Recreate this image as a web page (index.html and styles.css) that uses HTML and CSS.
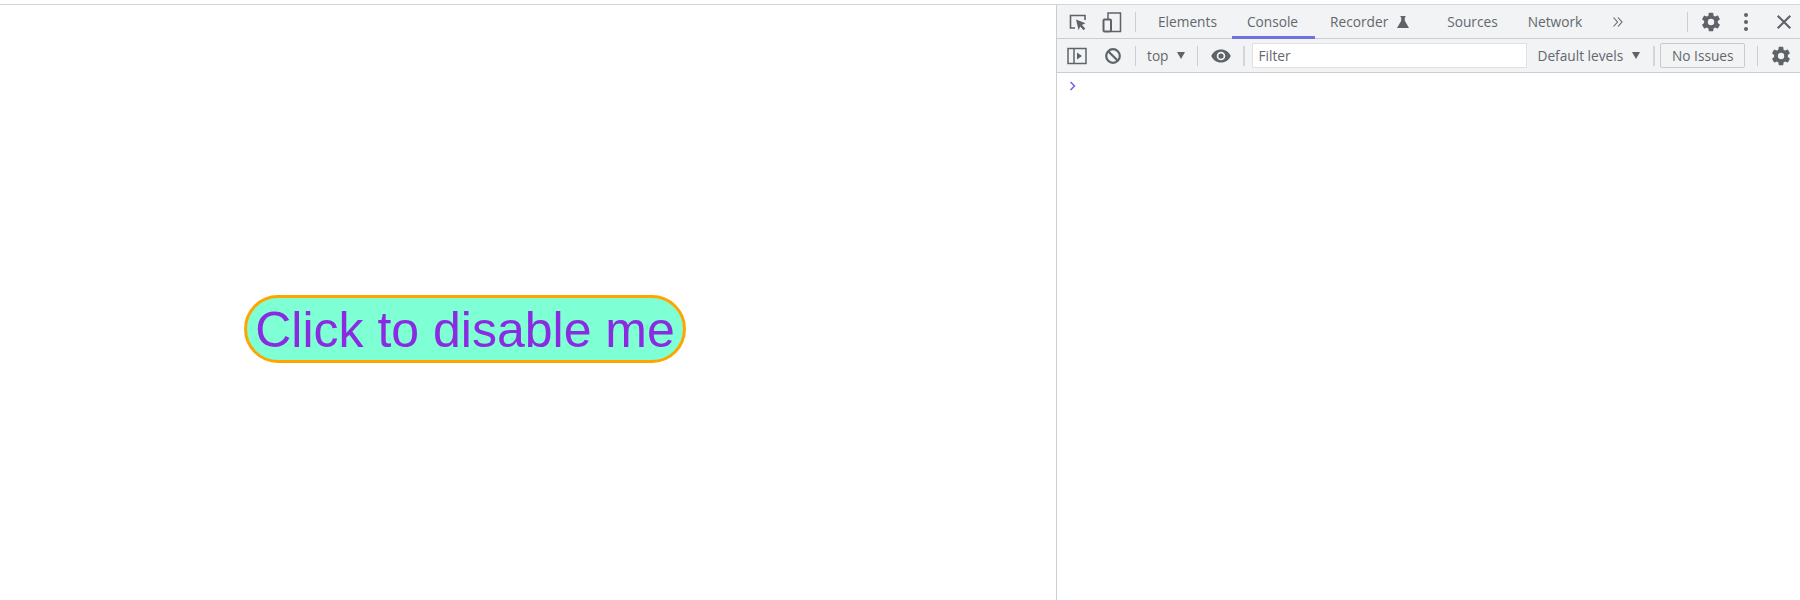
FILE: index.html
```html
<!DOCTYPE html>
<html>
  <head>
    <title>Click to disable me</title>
    <link rel="stylesheet" href="styles.css">
  </head>
  <body>
    <div class="window">
      <main class="page">
        <button class="fancy-btn">Click to disable me</button>
      </main>

      <aside class="devtools">
        <div class="toolbar tabs-bar">
          <span class="icon-btn first">
            <svg width="20" height="20" viewBox="0 0 20 20"><path d="M7 16H2.500V3.500H17V8" fill="none" stroke="#5f6368" stroke-width="1.600"/><path d="M8 7.500l9.500 3.800-3.600 1.600 3.400 3.600-1.700 1.700-3.400-3.600-1.600 3.600z" fill="#5f6368"/></svg>
          </span>
          <span class="icon-btn device">
            <svg width="20" height="22" viewBox="0 0 20 22"><path d="M6 8V2h12.500v18.500H9" fill="none" stroke="#5f6368" stroke-width="1.500"/><rect x="1.500" y="8.500" width="7.500" height="12" rx="1" fill="none" stroke="#5f6368" stroke-width="2"/></svg>
          </span>
          <span class="divider tabs-divider"></span>
          <a class="tab">Elements</a>
          <a class="tab active">Console</a>
          <a class="tab recorder">Recorder
            <svg width="14" height="14" viewBox="0 0 14 14"><path d="M4.500 1h5v1.200H8.800v3.600L13 13H1l4.200-7.200V2.200H4.500z" fill="#5f6368"/></svg>
          </a>
          <a class="tab sources">Sources</a>
          <a class="tab">Network</a>
          <span class="more">
            <svg width="12" height="12" viewBox="0 0 12 12"><path d="M1.500 1.500L5.500 6l-4 4.500M6 1.500L10 6l-4 4.500" fill="none" stroke="#5f6368" stroke-width="1.100"/></svg>
          </span>
          <span class="spacer"></span>
          <span class="divider"></span>
          <span class="icon-btn gear">
            <svg width="22" height="22" viewBox="0 0 24 24"><path d="M19.400 13c.05-.33.1-.66.1-1s-.05-.67-.1-1l2.100-1.650c.2-.15.25-.42.120-.64l-2-3.460c-.12-.22-.39-.3-.61-.22l-2.490 1c-.52-.4-1.060-.73-1.690-.98l-.37-2.650A.506.506 0 0 0 14 2h-4c-.25 0-.46.180-.5.420l-.37 2.650c-.63.25-1.170.59-1.690.98l-2.490-1c-.22-.08-.49 0-.61.220l-2 3.460c-.13.220-.07.490.12.640L4.570 11c-.05.330-.1.670-.1 1s.05.67.1 1l-2.110 1.650c-.19.150-.25.420-.12.640l2 3.460c.12.220.39.300.61.220l2.490-1c.52.400 1.060.730 1.690.980l.37 2.650c.04.240.25.420.5.420h4c.25 0 .46-.18.5-.42l.37-2.650c.63-.25 1.170-.59 1.690-.98l2.490 1c.22.08.49 0 .61-.22l2-3.460c.13-.22.07-.49-.12-.64zM12 15.500a3.500 3.500 0 1 1 0-7 3.500 3.500 0 0 1 0 7z" fill="#5f6368"/></svg>
          </span>
          <span class="kebab"><i></i><i></i><i></i></span>
          <span class="close">
            <svg width="16" height="16" viewBox="0 0 14 14"><path d="M1.500 1.500l11 11M12.500 1.500l-11 11" stroke="#5f6368" stroke-width="1.900"/></svg>
          </span>
        </div>

        <div class="toolbar filter-bar">
          <span class="icon-btn sidebar">
            <svg width="20" height="18" viewBox="0 0 20 18"><rect x="1" y="1.500" width="18" height="15" fill="none" stroke="#5f6368" stroke-width="1.500"/><path d="M7 1.500v15" stroke="#5f6368" stroke-width="1.500"/><path d="M10 5.500l5 3.500-5 3.500z" fill="#5f6368"/></svg>
          </span>
          <span class="icon-btn block">
            <svg width="18" height="18" viewBox="0 0 18 18"><circle cx="9" cy="9" r="6.800" fill="none" stroke="#5f6368" stroke-width="2.200"/><path d="M4.200 4.200l9.600 9.600" stroke="#5f6368" stroke-width="2.200"/></svg>
          </span>
          <span class="divider block-divider"></span>
          <span class="select top-select">top <b class="caret"></b></span>
          <span class="divider"></span>
          <span class="icon-btn eye">
            <svg width="20" height="14" viewBox="0 0 20 14"><path d="M10 .5C5.500.5 1.800 3.200.2 7c1.600 3.800 5.300 6.500 9.800 6.500s8.200-2.700 9.800-6.500C18.200 3.200 14.500.5 10 .5zm0 10.800a4.300 4.300 0 1 1 0-8.600 4.300 4.300 0 0 1 0 8.600zm0-6.900a2.600 2.600 0 1 0 0 5.200 2.600 2.600 0 0 0 0-5.200z" fill="#5f6368"/></svg>
          </span>
          <span class="divider thick"></span>
          <input class="filter" type="text" placeholder="Filter">
          <span class="select levels">Default levels <b class="caret"></b></span>
          <span class="divider thick"></span>
          <span class="issues">No Issues</span>
          <span class="divider"></span>
          <span class="icon-btn gear-2">
            <svg width="22" height="22" viewBox="0 0 24 24"><path d="M19.400 13c.05-.33.1-.66.1-1s-.05-.67-.1-1l2.100-1.650c.2-.15.25-.42.120-.64l-2-3.460c-.12-.22-.39-.3-.61-.22l-2.490 1c-.52-.4-1.060-.73-1.690-.98l-.37-2.650A.506.506 0 0 0 14 2h-4c-.25 0-.46.180-.5.420l-.37 2.650c-.63.25-1.170.59-1.690.98l-2.490-1c-.22-.08-.49 0-.61.220l-2 3.460c-.13.220-.07.490.12.640L4.570 11c-.05.330-.1.670-.1 1s.05.67.1 1l-2.110 1.650c-.19.150-.25.420-.12.640l2 3.460c.12.220.39.300.61.220l2.490-1c.52.400 1.060.730 1.690.980l.37 2.650c.04.240.25.420.5.420h4c.25 0 .46-.18.5-.42l.37-2.650c.63-.25 1.170-.59 1.690-.98l2.490 1c.22.08.49 0 .61-.22l2-3.460c.13-.22.07-.49-.12-.64zM12 15.500a3.500 3.500 0 1 1 0-7 3.500 3.500 0 0 1 0 7z" fill="#5f6368"/></svg>
          </span>
        </div>

        <div class="console">
          <svg width="8" height="10" viewBox="0 0 8 10"><path d="M1.500 1l4 4-4 4" fill="none" stroke="#6a66d9" stroke-width="1.500"/></svg>
        </div>
      </aside>
    </div>
  </body>
</html>
```

FILE: styles.css
```css
* {
  box-sizing: border-box;
  margin: 0;
  padding: 0;
}

html,
body {
  height: 100%;
  background: white;
  overflow: hidden;
}

.window {
  display: flex;
  height: 600px;
  margin-top: 4px;
  border-top: 1px solid #d5d6d8;
}

.page {
  flex: 1;
  padding: 290px 0 0 244px;
}

.fancy-btn {
  display: block;
  width: 442px;
  height: 68px;
  padding-top: 2px;
  background: aquamarine;
  color: blueviolet;
  border: 3px solid orange;
  border-radius: 34px;
  font-family: "Liberation Sans", Arial, sans-serif;
  font-size: 50px;
  white-space: nowrap;
}

.devtools {
  width: 744px;
  border-left: 1px solid #cbcdd1;
  font-family: "Open Sans", "Noto Sans", sans-serif;
  font-size: 13.700px;
  color: #63676c;
}

.toolbar {
  display: flex;
  align-items: center;
  height: 34px;
  background: #f1f3f4;
  border-bottom: 1px solid #cbcdd1;
}

.tabs-bar {
  align-items: stretch;
}

.tabs-bar > .icon-btn,
.tabs-bar > .divider,
.tabs-bar > .more,
.tabs-bar > .kebab,
.tabs-bar > .close {
  align-self: center;
}

.spacer {
  flex: 1;
}

.icon-btn {
  display: flex;
  align-items: center;
  justify-content: center;
}

.first {
  margin-left: 11px;
}

.device {
  margin-left: 14px;
}

.divider {
  width: 1px;
  height: 20px;
  background: #ccced2;
}

.divider.thick {
  width: 2px;
  background: #d3d5d8;
}

.tabs-divider {
  margin: 0 7px 0 13px;
}

.tab {
  display: flex;
  align-items: center;
  gap: 8px;
  padding: 2px 15px 0;
  border-bottom: 3px solid transparent;
  margin-bottom: -1px;
  white-space: nowrap;
}

.tab.active {
  padding-right: 17px;
  border-bottom-color: #7270dc;
}

.recorder {
  padding-right: 7px;
}

.sources {
  margin-left: 15px;
}

.more {
  display: flex;
  margin-left: 15px;
}

.gear {
  margin-left: 12px;
}

.kebab {
  display: flex;
  flex-direction: column;
  gap: 3px;
  margin-left: 22px;
}

.kebab i {
  width: 4px;
  height: 4px;
  border-radius: 50%;
  background: #5f6368;
}

.close {
  display: flex;
  margin: 0 8px 0 28px;
}

.sidebar {
  margin-left: 10px;
}

.block {
  margin-left: 17px;
}

.block-divider {
  margin-left: 13px;
}

.select {
  display: flex;
  align-items: center;
  gap: 8px;
  white-space: nowrap;
}

.top-select {
  margin: 0 12px 0 11px;
}

.caret {
  width: 0;
  height: 0;
  border-left: 4.500px solid transparent;
  border-right: 4.500px solid transparent;
  border-top: 7px solid #5f6368;
}

.eye {
  margin: 0 12px 0 13px;
}

.filter {
  width: 275px;
  height: 25px;
  margin-left: 7px;
  padding-left: 6px;
  border: 1px solid #e0e1e3;
  background: white;
  font-family: inherit;
  font-size: 13.700px;
  color: #63676c;
}

.filter::placeholder {
  color: #63676c;
}

.levels {
  margin: 0 13px 0 11px;
  gap: 9px;
}

.issues {
  width: 85px;
  height: 25px;
  margin: 0 12px 0 5px;
  line-height: 23px;
  text-align: center;
  border: 1px solid #c8cacd;
  border-radius: 2px;
}

.gear-2 {
  margin-left: 12px;
}

.console {
  padding: 8px 0 0 12px;
  line-height: 0;
}
```
